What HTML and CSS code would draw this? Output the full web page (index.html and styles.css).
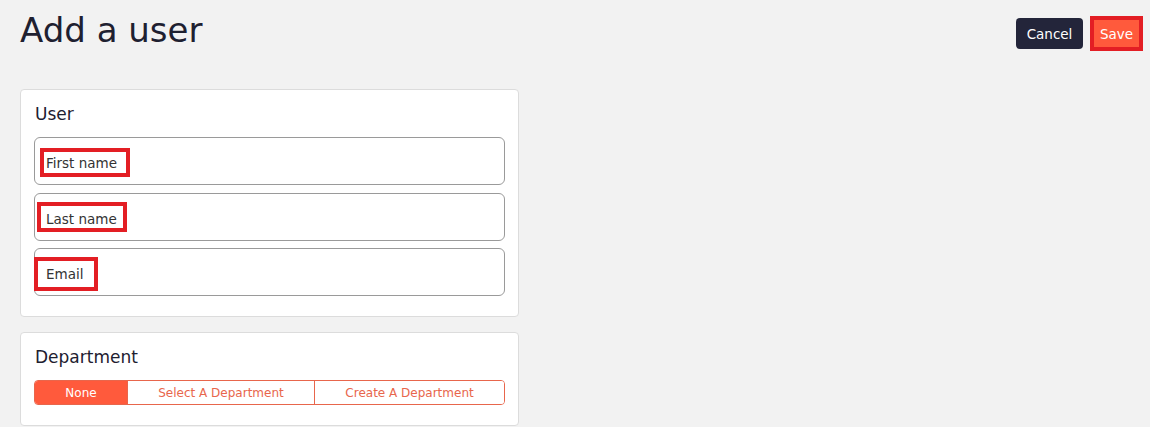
FILE: index.html
```html
<!DOCTYPE html>
<html lang="en">
<head>
<meta charset="utf-8">
<title>Add a user</title>
<link rel="stylesheet" href="styles.css">
</head>
<body>
<header class="page-header">
  <h1 class="page-title">Add a user</h1>
  <div class="actions">
    <button class="btn btn-cancel" type="button">Cancel</button>
    <button class="btn btn-save" type="button">Save</button>
  </div>
</header>
<main class="content">
  <section class="card">
    <h2 class="card-title">User</h2>
    <div class="fields">
      <div class="field">
        <span class="field-label">First name</span>
        <span class="mark mark-first"></span>
      </div>
      <div class="field">
        <span class="field-label">Last name</span>
        <span class="mark mark-last"></span>
      </div>
      <div class="field">
        <span class="field-label">Email</span>
        <span class="mark mark-email"></span>
      </div>
    </div>
  </section>
  <section class="card card-dept">
    <h2 class="card-title">Department</h2>
    <div class="segmented">
      <button class="seg seg-active" type="button">None</button>
      <button class="seg" type="button">Select A Department</button>
      <button class="seg" type="button">Create A Department</button>
    </div>
  </section>
</main>
</body>
</html>
```

FILE: styles.css
```css
* { box-sizing: border-box; }
html, body { height: 100%; }
body {
  margin: 0;
  background: #f2f2f2;
  font-family: "DejaVu Sans", "Liberation Sans", sans-serif;
  color: #1e2030;
  overflow: hidden;
}
.page-header {
  display: flex;
  justify-content: space-between;
  align-items: flex-start;
  padding: 0 9px 0 20px;
}
.page-title {
  margin: 10px 0 0;
  font-size: 34px;
  line-height: 40px;
  font-weight: 400;
  color: #1e2030;
}
.actions {
  display: flex;
  gap: 9px;
  margin-top: 18px;
}
.btn {
  height: 31px;
  border: none;
  border-radius: 4px;
  font-family: inherit;
  font-size: 13.5px;
  color: #fff;
  cursor: pointer;
}
.btn-cancel {
  width: 67px;
  padding: 0;
  background: #23253a;
}
.btn-save {
  width: 49px;
  padding: 0;
  border-radius: 0;
  background: #ff5a3c;
  outline: 4px solid #e31e24;
  outline-offset: -2px;
}
.content {
  padding: 39px 0 0 20px;
}
.card {
  width: 499px;
  background: #fff;
  border: 1px solid #dcdcdc;
  border-radius: 4px;
  padding: 14px 13px 20px;
}
.card-dept {
  margin-top: 15px;
}
.card-title {
  margin: 0 0 13px 1px;
  font-size: 17px;
  line-height: 20px;
  font-weight: 400;
  color: #1e2030;
}
.fields {
  display: flex;
  flex-direction: column;
  gap: 7.5px;
}
.field {
  position: relative;
  height: 48px;
  border: 1px solid #9a9a9a;
  border-radius: 6px;
  padding: 15px 11px 0;
}
.field-label {
  font-size: 13.5px;
  line-height: 18px;
  color: #333;
}
.mark {
  position: absolute;
  border: 4px solid #e31e24;
}
.mark-first { left: 5px; top: 10px; width: 90px; height: 29px; }
.mark-last { left: 2px; top: 8px; width: 90px; height: 30px; }
.mark-email { left: -1px; top: 8px; width: 64px; height: 34px; }
.segmented {
  display: flex;
  height: 25px;
  border: 1px solid #e8664c;
  border-radius: 4px;
  overflow: hidden;
}
.seg {
  flex: 1 1 auto;
  border: none;
  border-left: 1px solid #e8664c;
  background: #fff;
  color: #e8664c;
  font-family: inherit;
  font-size: 12px;
  padding: 0;
  cursor: pointer;
}
.seg:first-child { border-left: none; }
.seg-active {
  background: #ff5a3c;
  color: #fff;
}
```
